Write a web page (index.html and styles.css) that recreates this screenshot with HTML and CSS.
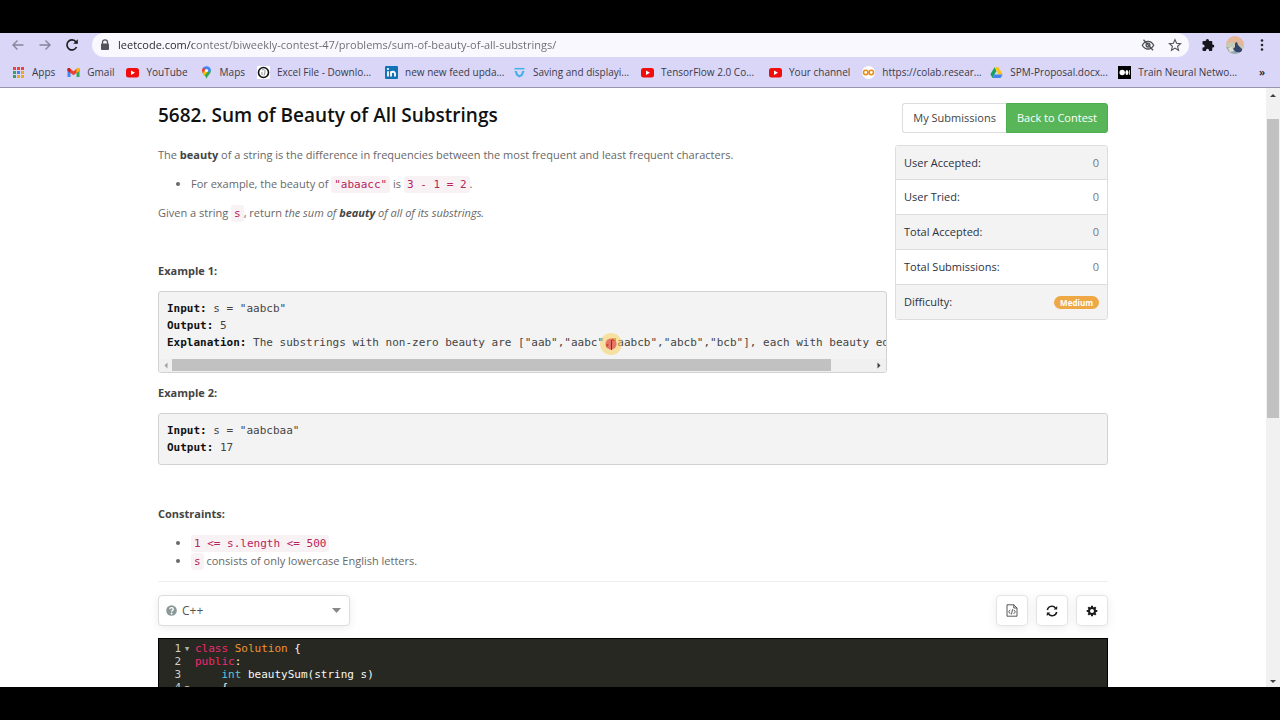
FILE: index.html
```
<!DOCTYPE html>
<html lang="en">
<head>
  <meta charset="UTF-8" />
  <meta name="viewport" content="width=device-width, initial-scale=1.0" />
  <title>Sum of Beauty of All Substrings</title>
  <link rel="stylesheet" href="styles.css">
</head>
<body>
  <header class="browser">
    <div class="toolbar">
      <button class="nav-btn off" aria-label="Back"><svg width="14" height="14" viewBox="0 0 14 14"><path d="M12.500 7H2M6.500 2.500 2 7l4.500 4.500"/></svg></button>
      <button class="nav-btn off" aria-label="Forward"><svg width="14" height="14" viewBox="0 0 14 14"><path d="M1.500 7H12M7.500 2.500 12 7l-4.500 4.500"/></svg></button>
      <button class="nav-btn" aria-label="Reload"><svg width="14" height="14" viewBox="0 0 14 14"><path d="M11.500 9A5 5 0 1 1 10.600 3.500L12 5" stroke-width="1.700"/><path d="M12.800 1.200v4.600H8.200z" class="solid"/></svg></button>
      <div class="address">
        <svg class="lock" width="10" height="12" viewBox="0 0 10 12"><path d="M2.500 5V3.300a2.500 2.500 0 0 1 5 0V5" fill="none" stroke="#54555c" stroke-width="1.300"/><rect x="1" y="4.500" width="8" height="6.500" rx="1" fill="#54555c"/></svg>
        <input class="url" type="text" aria-label="Address" value="leetcode.com/contest/biweekly-contest-47/problems/sum-of-beauty-of-all-substrings/">
        <button class="icon-btn" aria-label="Cookies blocked"><svg width="14" height="14" viewBox="0 0 14 14" fill="none" stroke="#4d4e56" stroke-width="1.300"><path d="M1.300 7.200C2.600 4.600 4.600 3.300 7 3.300s4.400 1.300 5.700 3.900C11.400 9.700 9.400 11 7 11S2.600 9.700 1.300 7.200z"/><circle cx="7" cy="7.100" r="1.900"/><path d="M2.500 1.800l9.500 10.400"/></svg></button>
        <button class="icon-btn" aria-label="Bookmark this page"><svg width="14" height="14" viewBox="0 0 14 14" fill="none" stroke="#4d4e56" stroke-width="1.100"><path d="M7 1.600l1.600 3.700 4 .35-3 2.650.9 3.950L7 10.150l-3.500 2.100.9-3.950-3-2.650 4-.35z"/></svg></button>
      </div>
      <button class="icon-btn" aria-label="Extensions"><svg width="14" height="14" viewBox="0 0 14 14"><path fill="#15161c" d="M1.500 4a1 1 0 0 1 1-1h2.300V2.500a1.600 1.600 0 0 1 3.200 0V3h2.300a1 1 0 0 1 1 1v2.400h.4a1.600 1.600 0 0 1 0 3.200h-.4V12a1 1 0 0 1-1 1H8v-.7a1.500 1.500 0 0 0-3 0v.7H2.500a1 1 0 0 1-1-1V9.500h.6a1.500 1.500 0 0 0 0-3h-.6z"/></svg></button>
      <button class="icon-btn avatar" aria-label="Profile"><svg width="18" height="18" viewBox="0 0 18 18"><defs><clipPath id="face"><circle cx="9" cy="9" r="9"/></clipPath></defs><g clip-path="url(#face)"><path fill="#e3b798" d="M0 0h18v18H0z"/><path fill="#c6cbb6" d="M0 8l6-2 12 5v7H0z"/><path fill="#92a9b8" d="M0 11l8 1 4 6H0z"/><path fill="#34456d" d="M9 7l2-1 1 3 4 4v4l-6-1-3-3 2-2z"/><path fill="#e4dfcc" d="M2 12l4-1 2 4-4 1z"/></g></svg></button>
      <button class="icon-btn menu" aria-label="Menu"><svg width="14" height="14" viewBox="0 0 14 14" fill="#25262c"><circle cx="7" cy="2.500" r="1.300"/><circle cx="7" cy="7" r="1.300"/><circle cx="7" cy="11.500" r="1.300"/></svg></button>
    </div>

    <nav class="bookmarks">
      <a href="#"><svg width="13" height="13" viewBox="0 0 13 13"><path fill="#e5473c" d="M1 1h3v3H1zM5 1h3v3H5zM9 1h3v3H9z"/><path fill="#38a160" d="M1 5h3v3H1z"/><path fill="#4384e4" d="M5 5h3v3H5z"/><path fill="#e9a829" d="M9 5h3v3H9zM5 9h3v3H5zM9 9h3v3H9z"/><path fill="#38a160" d="M1 9h3v3H1z"/></svg><span>Apps</span></a>
      <a href="#"><svg width="13" height="13" viewBox="0 0 13 13"><path fill="#4285f4" d="M.500 3v8h3V5z"/><path fill="#34a853" d="M12.500 3v8h-3V5z"/><path fill="#ea4335" d="M.500 3.500C.500 2 2 1.800 3 2.500L6.500 5.200 10 2.500c1-.7 2.500-.5 2.500 1v1.300l-6 4.400-6-4.400z"/><path fill="#c5221f" d="M.500 3.500C.500 2 2 1.800 3 2.500l.5.400V7l-3-2.200z"/><path fill="#fbbc04" d="M12.500 3.500c0-1.500-1.500-1.700-2.500-1l-.5.400V7l3-2.200z"/></svg><span>Gmail</span></a>
      <a href="#"><svg width="13" height="13" viewBox="0 0 13 13"><rect y="2" width="13" height="9.500" rx="2.500" fill="#f00d0d"/><path fill="#fff" d="M5 4.500v4.500l4-2.250z"/></svg><span>YouTube</span></a>
      <a href="#"><svg width="13" height="13" viewBox="0 0 13 13"><path fill="#34a853" d="M2.500 6.500C3.500 9 5.800 9.500 6.500 13c.7-3.500 4.500-5 4.500-8.500z"/><path fill="#fbbc04" d="M2.500 7l2.700-3.500L7.500 6l-3 3.500z"/><path fill="#ea4335" d="M2 4.500C2 3 2.700 1.700 3.800 1L6 3.500 2.700 7C2.200 6.200 2 5.400 2 4.500z"/><path fill="#4285f4" d="M3.800 1c2.400-1.800 7-.8 7.200 3.500L8 6.500 5 3.500z"/><circle cx="6.500" cy="4.500" r="1.600" fill="#fff"/></svg><span>Maps</span></a>
      <a href="#" class="long"><svg width="13" height="13" viewBox="0 0 13 13"><path fill="#fff" d="M0 0h13v13H0z"/><circle cx="6.500" cy="6.500" r="5" fill="none" stroke="#111" stroke-width="1.600"/><path d="M5 4c2-1 3.500 0 3 2L7 9.500M5 6v3" fill="none" stroke="#777" stroke-width=".8"/></svg><span>Excel File - Downlo...</span></a>
      <a href="#" class="long"><svg width="13" height="13" viewBox="0 0 13 13"><rect width="13" height="13" rx="1" fill="#1173b5"/><path stroke="#fff" stroke-width="1.800" fill="none" d="M3 5.200v5.300M6 10.500V5.200M6 7.700c0-2.500 4-2.700 4 0v2.800"/><circle cx="3" cy="3" r="1.100" fill="#fff"/></svg><span>new new feed upda...</span></a>
      <a href="#" class="long"><svg width="13" height="13" viewBox="0 0 13 13"><path d="M1.500 2.700h10" stroke="#43b0e8" stroke-width="1.500"/><path d="M1.500 5h2.300l1.200 3.200 1.500.8L8 8.200 9.200 5h2.300l-1.700 4.500-3.300 2-3.300-2z" fill="#43b0e8"/></svg><span>Saving and displayi...</span></a>
      <a href="#" class="long"><svg width="13" height="13" viewBox="0 0 13 13"><rect y="2" width="13" height="9.500" rx="2.500" fill="#f00d0d"/><path fill="#fff" d="M5 4.500v4.500l4-2.250z"/></svg><span>TensorFlow 2.0 Co...</span></a>
      <a href="#"><svg width="13" height="13" viewBox="0 0 13 13"><rect y="2" width="13" height="9.500" rx="2.500" fill="#f00d0d"/><path fill="#fff" d="M5 4.500v4.500l4-2.250z"/></svg><span>Your channel</span></a>
      <a href="#" class="long"><svg width="13" height="13" viewBox="0 0 13 13"><circle cx="6.500" cy="6.500" r="6.500" fill="#fff"/><g fill="none" stroke="#ea8b12" stroke-width="1.600"><circle cx="3.700" cy="6.500" r="2.200"/><circle cx="9.300" cy="6.500" r="2.200"/></g></svg><span>https://colab.resear...</span></a>
      <a href="#" class="long"><svg width="13" height="13" viewBox="0 0 13 13"><path fill="#17a05e" d="M4.500 1.200L6.600 4.800 2.500 12 .400 8.300z"/><path fill="#fbc414" d="M4.500 1.200h4l4.200 7.200H8.500z"/><path fill="#4382ed" d="M4.600 8.400h8.100L10.600 12H2.500z"/></svg><span>SPM-Proposal.docx...</span></a>
      <a href="#" class="long"><svg width="13" height="13" viewBox="0 0 13 13"><path fill="#000" d="M0 0h13v13H0z"/><circle cx="4.200" cy="6.500" r="2.700" fill="#fff"/><ellipse cx="8.900" cy="6.500" rx="1.500" ry="2.600" fill="#fff"/><path stroke="#fff" stroke-width=".8" d="M11.500 4.200v4.600"/></svg><span>Train Neural Netwo...</span></a>
      <button class="more" aria-label="More bookmarks">»</button>
    </nav>
  </header>

  <div class="viewport">
    <main class="page">
      <div class="container">
        <div class="top">
          <section class="question">
            <h1>5682. Sum of Beauty of All Substrings</h1>
            <p>The <b>beauty</b> of a string is the difference in frequencies between the most frequent and least frequent characters.</p>
            <ul>
              <li>For example, the beauty of <code>"abaacc"</code> is <code>3 - 1 = 2</code>.</li>
            </ul>
            <p>Given a string <code>s</code>, return <i>the sum of <b>beauty</b> of all of its substrings.</i></p>
            <p>&nbsp;</p>
            <p><b>Example 1:</b></p>
            <div class="sample">
              <pre><b>Input:</b> s = "aabcb"
<b>Output:</b> 5
<b>Explanation:</b> The substrings with non-zero beauty are ["aab","aabc","aabcb","abcb","bcb"], each with beauty equal to 1.</pre>
              <span class="cursor"></span>
              <div class="hscroll">
                <svg width="13" height="13" viewBox="0 0 13 13"><path fill="#a0a0a0" d="M8.500 3.500v6l-3-3z"/></svg>
                <div class="track"><div class="thumb"></div></div>
                <svg width="13" height="13" viewBox="0 0 13 13"><path fill="#404040" d="M4.500 3.500v6l3-3z"/></svg>
              </div>
            </div>
          </section>

          <aside class="side">
            <div class="btn-group">
              <a class="btn" href="#">My Submissions</a>
              <a class="btn green" href="#">Back to Contest</a>
            </div>
            <ul class="stats">
              <li>User Accepted: <span>0</span></li>
              <li>User Tried: <span>0</span></li>
              <li>Total Accepted: <span>0</span></li>
              <li>Total Submissions: <span>0</span></li>
              <li>Difficulty: <span class="label">Medium</span></li>
            </ul>
          </aside>
        </div>

        <section class="question">
          <p><b>Example 2:</b></p>
          <div class="sample">
            <pre><b>Input:</b> s = "aabcbaa"
<b>Output:</b> 17</pre>
          </div>
          <p>&nbsp;</p>
          <p><b>Constraints:</b></p>
          <ul>
            <li><code>1 &lt;= s.length &lt;= 500</code></li>
            <li><code>s</code> consists of only lowercase English letters.</li>
          </ul>
        </section>

        <div class="editor-bar">
          <div class="lang">
            <svg width="11" height="11" viewBox="0 0 11 11"><circle cx="5.500" cy="5.500" r="5.300" fill="#8b9898"/><path d="M3.800 4.200c.1-2.200 3.500-2.100 3.500 0 0 1.300-1.700 1.200-1.700 2.500" fill="none" stroke="#fff" stroke-width="1.400"/><circle cx="5.600" cy="8.500" r=".9" fill="#fff"/></svg>
            <select aria-label="Language"><option>C++</option></select>
            <svg class="caret" width="9" height="5" viewBox="0 0 9 5"><path fill="#888" d="M0 0h9L4.500 5z"/></svg>
          </div>
          <div class="tools">
            <button class="tool" aria-label="Restore code"><svg width="12" height="13" viewBox="0 0 12 13" fill="none" stroke="#444" stroke-width=".9"><path d="M1 .800h6.800L11 4v8.200H1zM7.800.800V4H11M4.200 5.800L2.700 7.800l1.500 2M7.800 5.800l1.500 2-1.500 2M6.600 5.200l-1.200 5.200"/></svg></button>
            <button class="tool" aria-label="Reset"><svg width="12" height="12" viewBox="0 0 12 12" fill="none" stroke="#1b1b1b" stroke-width="1.500"><path d="M1.300 5A4.700 4.700 0 0 1 9.500 2.900M10.700 7a4.700 4.700 0 0 1-8.200 2.100"/><path d="M11.200 1v3.600H7.600zM.800 11V7.400h3.600z" fill="#1b1b1b" stroke="none"/></svg></button>
            <button class="tool" aria-label="Settings"><svg width="12" height="12" viewBox="0 0 12 12"><circle cx="6" cy="6" r="3" fill="none" stroke="#1b1b1b" stroke-width="2"/><path stroke="#1b1b1b" stroke-width="2" d="M6 .700v2M6 9.300v2M.700 6h2M9.300 6h2M2.250 2.250l1.400 1.400M8.350 8.350l1.400 1.400M2.250 9.750l1.400-1.400M8.350 3.650l1.400-1.400"/></svg></button>
          </div>
        </div>

        <div class="editor">
          <div class="line"><span class="num">1</span><span class="fold">▾</span><code><span class="kw">class</span> <span class="cls">Solution</span> {</code></div>
          <div class="line"><span class="num">2</span><span class="fold"></span><code><span class="kw">public</span>:</code></div>
          <div class="line"><span class="num">3</span><span class="fold"></span><code>    <span class="type">int</span> beautySum(string s)</code></div>
          <div class="line"><span class="num">4</span><span class="fold">▾</span><code>    {</code></div>
        </div>
      </div>
    </main>

    <div class="vscroll">
      <svg width="14" height="14" viewBox="0 0 14 14"><path fill="#404040" d="M4 9h6L7 6z"/></svg>
      <div class="track"><div class="thumb"></div></div>
      <svg width="14" height="14" viewBox="0 0 14 14"><path fill="#404040" d="M4 7h6l-3 3z"/></svg>
    </div>
  </div>
</body>
</html>
```
FILE: styles.css
```
* { margin: 0; padding: 0; box-sizing: border-box; }
body {
  display: flex;
  flex-direction: column;
  height: 100vh;
  padding: 33px 0;
  overflow: hidden;
  background: #000;
  color: #686868;
  font-family: "Open Sans", "Noto Sans", sans-serif;
  font-size: 11px;
  line-height: 18px;
}
button { background: none; border: none; font: inherit; cursor: pointer; }
a { color: inherit; text-decoration: none; }
svg { display: block; flex: none; }

/* browser bars */
.browser { background: #dad6f7; border-bottom: 1px solid #9896ae; }
.toolbar {
  display: flex;
  align-items: center;
  height: 24px;
  padding: 0 5px 0 11px;
}
.nav-btn { width: 27px; }
.nav-btn svg { fill: none; stroke: #1d1e24; stroke-width: 1.4; }
.nav-btn .solid { fill: #1d1e24; stroke: none; }
.nav-btn.off svg { stroke: #87859b; }
.address {
  display: flex;
  flex: 1;
  align-items: center;
  height: 24px;
  margin-right: 5px;
  padding: 0 1px 0 8px;
  border-radius: 12px;
  background: #f9f8fe;
}
.url {
  flex: 1;
  min-width: 0;
  margin-left: 8px;
  border: none;
  outline: none;
  font: inherit;
  /* host part is darker than the path */
  background: linear-gradient(to right, #25262b 75px, #6a6a72 75px);
  background-clip: text;
  -webkit-background-clip: text;
  color: transparent;
}
.icon-btn { width: 27px; }
.icon-btn svg { margin: 0 auto; }
.bookmarks {
  display: flex;
  align-items: center;
  gap: 12px;
  height: 30px;
  padding: 0 15px 0 12px;
  color: #3b3a49;
  font-size: 10px;
  white-space: nowrap;
}
.bookmarks a { display: flex; align-items: center; gap: 7px; }
.bookmarks .long { width: 116px; }
.more { margin-left: auto; color: #222; font-size: 11px; font-weight: 600; }

/* page area */
.viewport { display: flex; flex: 1; min-height: 0; background: #fff; }
.page { flex: 1; min-width: 0; overflow: hidden; }
.container { max-width: 950px; margin: 0 auto; }
.top { display: flex; gap: 8px; }
.top .question { flex: 1; min-width: 0; }
h1 {
  margin: 14px 0 18px;
  color: #111;
  font-size: 19px;
  font-weight: 600;
  line-height: 26px;
}
.question p, .question ul { margin-bottom: 11px; }
.question ul { padding-left: 33px; }
.question b { color: #444; font-weight: 700; }
code, pre, .editor { font-family: "DejaVu Sans Mono", monospace; font-size: 11px; }
.question code {
  padding: 2px 3px;
  border-radius: 3px;
  background: #f9f2f4;
  color: #b5245c;
  line-height: 14px;
}
.sample {
  position: relative;
  margin-bottom: 11px;
  overflow: hidden;
  border: 1px solid #d2d2d2;
  border-radius: 3px;
  background: #f3f3f3;
}
.sample pre {
  padding: 8px;
  overflow: hidden;
  color: #444;
  line-height: 17px;
}
.sample pre b { color: #111; }
/* highlighted mouse pointer with the text beam in it */
.cursor {
  position: absolute;
  left: 441px;
  top: 41px;
  width: 22px;
  height: 22px;
  border-radius: 50%;
  background: radial-gradient(circle, rgba(224, 64, 44, 0.7) 5px, rgba(250, 205, 80, 0.5) 6px);
}
.cursor::after {
  content: "";
  position: absolute;
  left: 11px;
  top: 7px;
  width: 1px;
  height: 10px;
  background: #7a3030;
}
.hscroll { display: flex; height: 13px; background: #f0f0f0; }
.hscroll .track { flex: 1; }
.hscroll .thumb { width: 94%; height: 12px; background: #c1c1c1; }

/* right column */
.side { width: 213px; padding-top: 15px; }
.btn-group { display: flex; justify-content: flex-end; margin-bottom: 12px; }
.btn {
  padding: 5px 10px;
  border: 1px solid #ddd;
  border-right: none;
  border-radius: 3px 0 0 3px;
  color: #444;
  white-space: nowrap;
}
.btn.green {
  border: 1px solid #4cae4c;
  border-radius: 0 3px 3px 0;
  background: #58b658;
  color: #fff;
}
.stats {
  overflow: hidden;
  border: 1px solid #ddd;
  border-radius: 3px;
  list-style: none;
  color: #2c3240;
}
.stats li {
  display: flex;
  align-items: center;
  justify-content: space-between;
  height: 35px;
  padding: 0 8px;
  border-bottom: 1px solid #ddd;
}
.stats li:nth-child(odd) { background: #f3f3f3; }
.stats li:first-child, .stats li:last-child { height: 34px; }
.stats li:last-child { border-bottom: none; }
.stats span { color: #777; }
.stats .label {
  padding: 0 6px;
  border-radius: 7px;
  background: #eea845;
  color: #fff;
  font-size: 8px;
  font-weight: 700;
  line-height: 13px;
}

/* code editor */
.editor-bar {
  display: flex;
  justify-content: space-between;
  padding: 13px 0 12px;
  border-top: 1px solid #eee;
}
.lang, .tool {
  height: 31px;
  border: 1px solid #ddd;
  border-radius: 4px;
  background: #fff;
  box-shadow: 0 2px 10px rgba(0, 0, 0, 0.08);
}
.lang { display: flex; align-items: center; width: 192px; padding: 0 8px 0 7px; }
.lang select {
  flex: 1;
  margin-left: 5px;
  border: none;
  outline: none;
  appearance: none;
  background: none;
  color: #555;
  font: inherit;
  font-size: 12px;
}
.tools { display: flex; gap: 8px; }
.tool { width: 32px; border-color: #e4e4e4; }
.tool svg { margin: 0 auto; }
.editor {
  padding: 3px 0 20px;
  border: 1px solid #000;
  background: #272822;
  color: #f8f8f2;
}
.line { display: flex; height: 13px; line-height: 13px; white-space: pre; }
.num { width: 22px; text-align: right; color: #d0d0c8; }
.fold { width: 14px; padding-right: 2px; text-align: center; color: #b0b0a8; font-size: 11px; }
.kw { color: #f0286e; }
.cls { color: #f09433; }
.type { color: #58c8dd; }

/* page scrollbar */
.vscroll { display: flex; flex-direction: column; width: 14px; background: #f1f1f1; }
.vscroll .track { flex: 1; padding: 17px 1px 0; }
.vscroll .thumb { height: 54%; background: #c1c1c1; }
```
